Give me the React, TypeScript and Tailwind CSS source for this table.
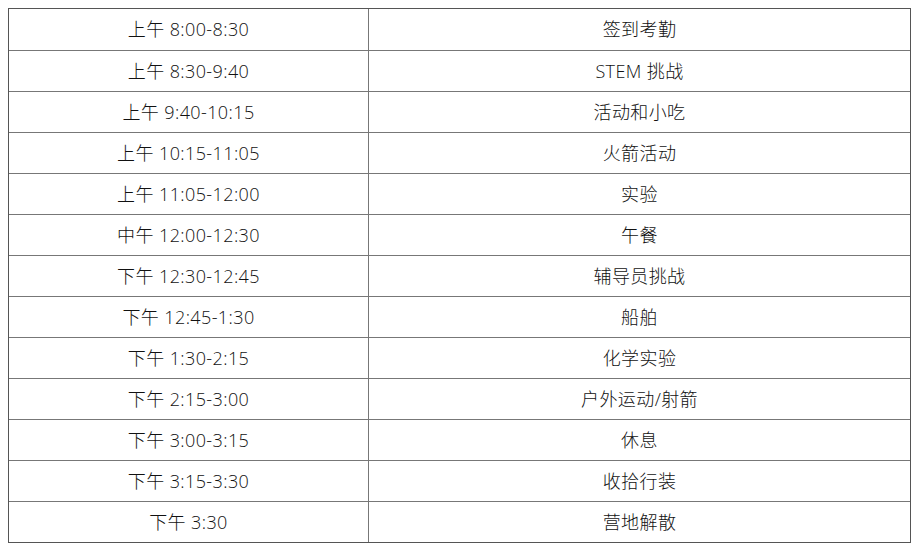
const rows: [string, string][] = [
  ["上午 8:00-8:30", "签到考勤"],
  ["上午 8:30-9:40", "STEM 挑战"],
  ["上午 9:40-10:15", "活动和小吃"],
  ["上午 10:15-11:05", "火箭活动"],
  ["上午 11:05-12:00", "实验"],
  ["中午 12:00-12:30", "午餐"],
  ["下午 12:30-12:45", "辅导员挑战"],
  ["下午 12:45-1:30", "船舶"],
  ["下午 1:30-2:15", "化学实验"],
  ["下午 2:15-3:00", "户外运动/射箭"],
  ["下午 3:00-3:15", "休息"],
  ["下午 3:15-3:30", "收拾行装"],
  ["下午 3:30", "营地解散"],
];

export default function App() {
  return (
    <div className="w-[924px] h-[549px] bg-white pt-2 pl-2" style={{ fontFamily: '"Open Sans", "Noto Sans CJK SC", sans-serif' }}>
      <div className="w-[903px] border border-[#555] text-[18px] tracking-[0.4px] font-light text-[#111]">
        {rows.map(([time, activity], i) => (
          <div key={time} className={`flex h-[41px] ${i > 0 ? "border-t border-[#777]" : ""}`}>
            <div className="w-[360px] flex items-center justify-center border-r border-[#777]">{time}</div>
            <div className="flex-1 flex items-center justify-center">{activity}</div>
          </div>
        ))}
      </div>
    </div>
  );
}
